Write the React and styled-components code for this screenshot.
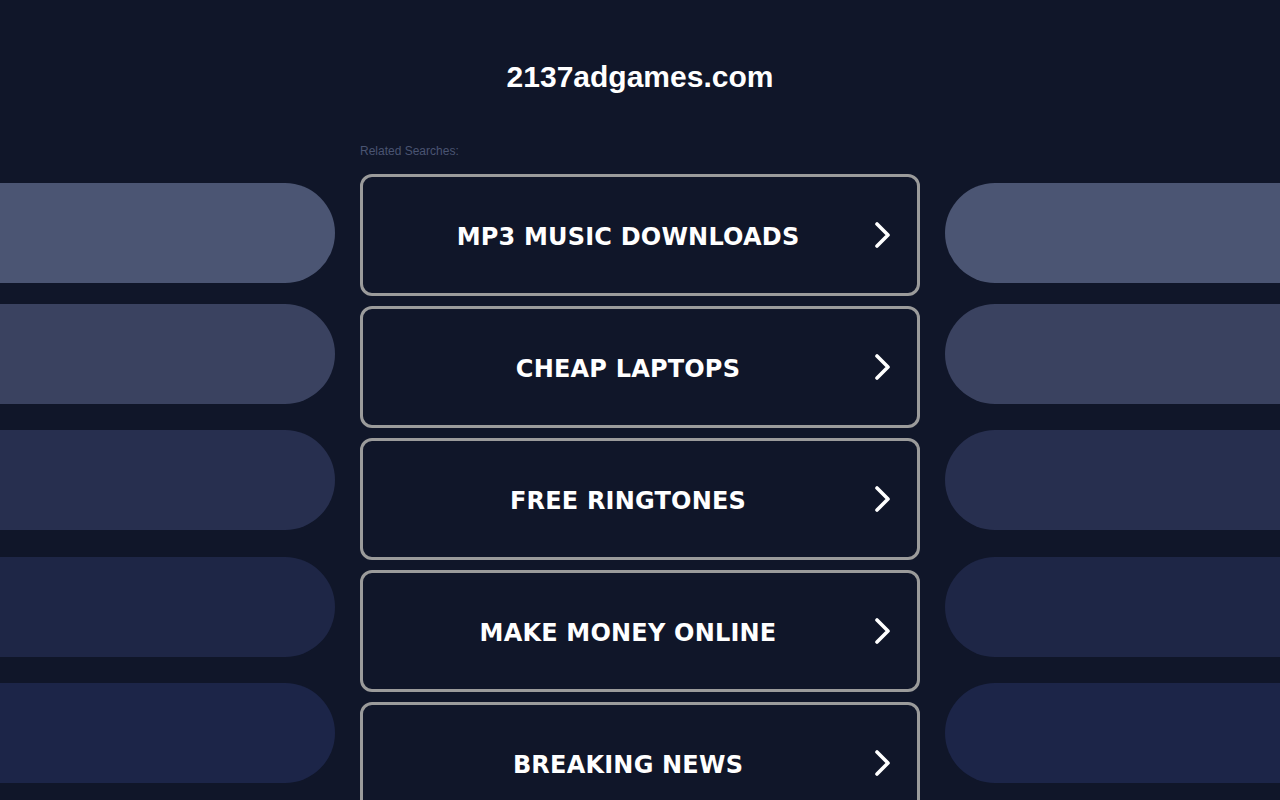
import React from 'react';
import styled, { createGlobalStyle } from 'styled-components';

const GlobalStyle = createGlobalStyle`
  html, body {
    margin: 0;
    padding: 0;
    background: #101629;
  }
  body {
    font-family: "Liberation Sans", Arial, sans-serif;
  }
`;

const Page = styled.div`
  height: 800px;
  overflow: hidden;
  background: #101629;
`;

const Header = styled.header`
  padding-top: 58px;
  text-align: center;
`;

const Title = styled.h1`
  margin: 0;
  height: 36px;
  line-height: 37px;
  font-family: "Liberation Sans", Arial, sans-serif;
  font-size: 30px;
  font-weight: 700;
  color: #ffffff;
`;

const Row = styled.main`
  display: flex;
  justify-content: center;
  gap: 25px;
  margin-top: 46px;
`;

const Side = styled.div`
  width: 335px;
  flex-shrink: 0;
  padding-top: 43px;
  display: flex;
  flex-direction: column;
`;

const Pill = styled.div`
  height: 100px;
  margin-top: ${p => p.$top}px;
  background: ${p => p.$color};
  border-radius: ${p => (p.$side === 'left' ? '0 50px 50px 0' : '50px 0 0 50px')};
`;

const Center = styled.div`
  width: 560px;
  flex-shrink: 0;
  display: flex;
  flex-direction: column;
`;

const Related = styled.div`
  height: 20px;
  line-height: 22px;
  font-size: 12px;
  color: #4a5472;
  margin-bottom: 14px;
`;

const Card = styled.a`
  position: relative;
  box-sizing: border-box;
  height: 122px;
  margin-bottom: 10px;
  border: 3px solid #9b9b9b;
  border-radius: 12px;
  padding-right: 24px;
  display: flex;
  align-items: center;
  text-decoration: none;
  cursor: pointer;
`;

const Label = styled.span`
  flex: 1;
  padding-top: 4px;
  text-align: center;
  font-family: "DejaVu Sans", Verdana, sans-serif;
  font-size: 24px;
  font-weight: 700;
  letter-spacing: 0.2px;
  color: #ffffff;
`;

const Chevron = styled.svg`
  position: absolute;
  right: 26px;
  top: 50%;
  margin-top: -13px;
  width: 18px;
  height: 26px;
`;

const pills = [
  { top: 0, color: '#4b5573' },
  { top: 21, color: '#3a4260' },
  { top: 26, color: '#272f4f' },
  { top: 27, color: '#1e2646' },
  { top: 26, color: '#1c2548' },
];

const items = [
  'MP3 MUSIC DOWNLOADS',
  'CHEAP LAPTOPS',
  'FREE RINGTONES',
  'MAKE MONEY ONLINE',
  'BREAKING NEWS',
];

function SideColumn({ side }) {
  return (
    <Side>
      {pills.map((p, i) => (
        <Pill key={i} $top={p.top} $color={p.color} $side={side} />
      ))}
    </Side>
  );
}

export default function App() {
  return (
    <Page>
      <GlobalStyle />
      <Header>
        <Title>2137adgames.com</Title>
      </Header>
      <Row>
        <SideColumn side="left" />
        <Center>
          <Related>Related Searches:</Related>
          {items.map(t => (
            <Card key={t}>
              <Label>{t}</Label>
              <Chevron viewBox="0 0 18 26">
                <polyline
                  points="4,2 15,13 4,24"
                  fill="none"
                  stroke="#ffffff"
                  strokeWidth="3.6"
                  strokeLinecap="round"
                  strokeLinejoin="round"
                />
              </Chevron>
            </Card>
          ))}
        </Center>
        <SideColumn side="right" />
      </Row>
    </Page>
  );
}
